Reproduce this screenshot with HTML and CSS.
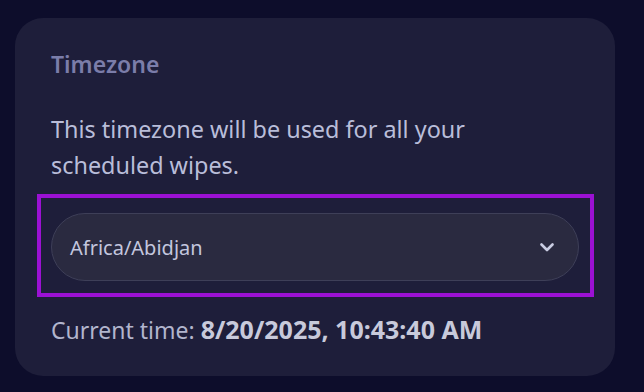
FILE: index.html
```html
<!DOCTYPE html>
<html lang="en">
<head>
<meta charset="utf-8">
<title>Timezone</title>
<link rel="stylesheet" href="styles.css">
</head>
<body>
<section class="card">
  <h2 class="card-title">Timezone</h2>
  <p class="card-desc">This timezone will be used for all your scheduled wipes.</p>
  <div class="focus-ring">
    <div class="select" role="combobox" aria-expanded="false" tabindex="0">
      <span class="select-value">Africa/Abidjan</span>
      <svg class="chevron" width="14" height="9" viewBox="0 0 14 9" aria-hidden="true">
        <path d="M1.5 1.5 L7 7 L12.5 1.5" fill="none" stroke="currentColor" stroke-width="2.6" stroke-linecap="round" stroke-linejoin="round"/>
      </svg>
    </div>
  </div>
  <p class="current-time">Current time: <strong>8/20/2025, 10:43:40 AM</strong></p>
</section>
</body>
</html>
```

FILE: styles.css
```css
html, body {
  margin: 0;
  padding: 0;
}

body {
  background: #0d0d2b;
  font-family: "Noto Sans", "Open Sans", sans-serif;
  min-height: 392px;
  padding-top: 18px;
  box-sizing: border-box;
}

.card {
  width: 600px;
  margin-left: 15px;
  box-sizing: border-box;
  background: #1e1e3a;
  border-radius: 28px;
  padding: 30px 0 30px 36px;
}

.card-title {
  margin: 0;
  font-size: 23px;
  line-height: 32px;
  font-weight: 600;
  color: #7b7da9;
}

.card-desc {
  margin: 31px 0 0;
  width: 480px;
  font-size: 23.4px;
  line-height: 36px;
  color: #b9bdd9;
}

.focus-ring {
  margin: 11px 0 0 -14px;
  width: 557px;
  box-sizing: border-box;
  border: 4px solid #9b11d4;
  padding: 15px 11px 12px 10px;
}

.select {
  height: 68px;
  box-sizing: border-box;
  border: 1px solid #3e3f58;
  border-radius: 34px;
  background: #2a2a40;
  display: flex;
  align-items: center;
  justify-content: space-between;
  padding: 0 24px 0 18px;
  outline: none;
}

.select-value {
  font-size: 20px;
  color: #c3c6de;
}

.chevron {
  color: #c9cce2;
  display: block;
}

.current-time {
  margin: 17px 0 0;
  font-size: 23px;
  line-height: 32px;
  color: #b2b5cd;
}

.current-time strong {
  font-size: 25px;
  line-height: 1;
  font-weight: 700;
  color: #c8cadb;
}
```
